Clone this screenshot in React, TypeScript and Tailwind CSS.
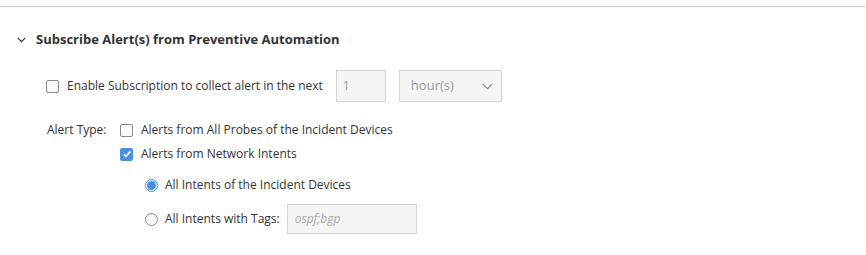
import React from 'react';

const Check: React.FC<{ checked?: boolean }> = ({ checked }) =>
  checked ? (
    <span className="w-[13px] h-[13px] rounded-[2px] bg-[#4a90e2] flex items-center justify-center flex-shrink-0">
      <svg width="10" height="10" viewBox="0 0 10 10">
        <path d="M1.8 5.2 L4 7.4 L8.4 2.4" fill="none" stroke="#fff" strokeWidth="1.6" />
      </svg>
    </span>
  ) : (
    <span className="w-[13px] h-[13px] rounded-[2px] border border-[#8a8a8a] bg-[#fafafa] flex-shrink-0" />
  );

const Radio: React.FC<{ checked?: boolean }> = ({ checked }) =>
  checked ? (
    <span className="w-[13px] h-[13px] rounded-full border border-[#4a90e2] bg-white flex items-center justify-center flex-shrink-0">
      <span className="w-[9px] h-[9px] rounded-full bg-[#4a90e2]" />
    </span>
  ) : (
    <span className="w-[13px] h-[13px] rounded-full border border-[#8a8a8a] bg-[#fafafa] flex-shrink-0" />
  );

export default function App() {
  return (
    <div className="w-[866px] h-[255px] bg-white text-[12px] text-[#333] font-['Open_Sans',sans-serif]">
      <div className="pt-[6px]">
        <div className="h-px bg-[#cccccc] mr-px" />
      </div>

      {/* Section header */}
      <div className="flex items-center pl-[17px] mt-[25px] h-[16px]">
        <svg width="9" height="6" viewBox="0 0 9 6" className="mr-[10px]">
          <path d="M0.7 0.8 L4.5 4.6 L8.3 0.8" fill="none" stroke="#333" strokeWidth="1.2" />
        </svg>
        <span className="text-[13px] font-bold">Subscribe Alert(s) from Preventive Automation</span>
      </div>

      {/* Subscription row */}
      <div className="flex items-center pl-[46px] mt-[22px]">
        <Check />
        <span className="ml-[8px]">Enable Subscription to collect alert in the next</span>
        <div className="ml-[13px] w-[50px] h-[32px] border border-[#d4d4d4] bg-[#f5f5f5] flex items-center pl-[6px] text-[#999]">1</div>
        <div className="ml-[13px] w-[103px] h-[32px] border border-[#d4d4d4] bg-[#f5f5f5] flex items-center justify-between pl-[11px] pr-[8px] text-[#999]">
          <span className="text-[13px]">hour(s)</span>
          <svg width="11" height="7" viewBox="0 0 11 7">
            <path d="M0.7 0.8 L5.5 5.6 L10.3 0.8" fill="none" stroke="#888" strokeWidth="1.1" />
          </svg>
        </div>
      </div>

      {/* Alert type */}
      <div className="flex pl-[47px] mt-[21px]">
        <span className="w-[73px] leading-[14px]">Alert Type:</span>
        <div className="flex flex-col">
          <div className="flex items-center h-[14px]">
            <Check />
            <span className="ml-[8px]">Alerts from All Probes of the Incident Devices</span>
          </div>
          <div className="flex items-center h-[14px] mt-[10px]">
            <Check checked />
            <span className="ml-[8px]">Alerts from Network Intents</span>
          </div>
          <div className="pl-[25px] mt-[17px] flex flex-col">
            <div className="flex items-center h-[14px]">
              <Radio checked />
              <span className="ml-[7px]">All Intents of the Incident Devices</span>
            </div>
            <div className="flex items-center mt-[12px]">
              <Radio />
              <span className="ml-[7px]">All Intents with Tags:</span>
              <div className="ml-[7px] w-[130px] h-[30px] border border-[#d4d4d4] bg-[#f5f5f5] flex items-center pl-[7px] italic text-[#aaa]">ospf;bgp</div>
            </div>
          </div>
        </div>
      </div>
    </div>
  );
}
